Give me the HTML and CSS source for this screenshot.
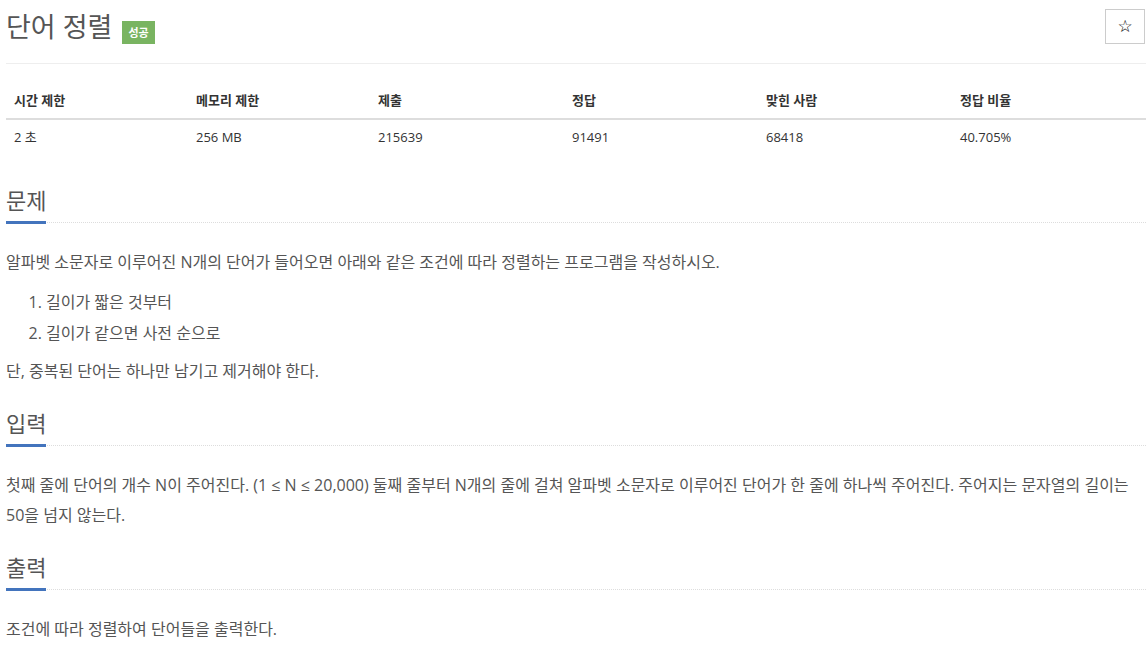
FILE: index.html
```html
<!DOCTYPE html>
<html lang="ko">
<head>
<meta charset="utf-8">
<title>단어 정렬</title>
<link rel="stylesheet" href="styles.css">
</head>
<body>
<div class="container">
  <div class="page-header">
    <h1 class="title"><span class="title-text">단어 정렬</span><span class="badge">성공</span></h1>
    <button class="star" type="button">☆</button>
  </div>

  <table class="info">
    <thead>
      <tr>
        <th class="c1">시간 제한</th>
        <th class="c2">메모리 제한</th>
        <th class="c3">제출</th>
        <th class="c4">정답</th>
        <th class="c5">맞힌 사람</th>
        <th class="c6">정답 비율</th>
      </tr>
    </thead>
    <tbody>
      <tr>
        <td>2 초</td>
        <td>256 MB</td>
        <td>215639</td>
        <td>91491</td>
        <td>68418</td>
        <td>40.705%</td>
      </tr>
    </tbody>
  </table>

  <section class="section">
    <div class="headline"><h2>문제</h2></div>
    <div class="text">
      <p>알파벳 소문자로 이루어진 N개의 단어가 들어오면 아래와 같은 조건에 따라 정렬하는 프로그램을 작성하시오.</p>
      <ol>
        <li>길이가 짧은 것부터</li>
        <li>길이가 같으면 사전 순으로</li>
      </ol>
      <p>단, 중복된 단어는 하나만 남기고 제거해야 한다.</p>
    </div>
  </section>

  <section class="section">
    <div class="headline"><h2>입력</h2></div>
    <div class="text">
      <p>첫째 줄에 단어의 개수 N이 주어진다. (1 ≤ N ≤ 20,000) 둘째 줄부터 N개의 줄에 걸쳐 알파벳 소문자로 이루어진 단어가 한 줄에 하나씩 주어진다. 주어지는 문자열의 길이는 50을 넘지 않는다.</p>
    </div>
  </section>

  <section class="section">
    <div class="headline"><h2>출력</h2></div>
    <div class="text">
      <p>조건에 따라 정렬하여 단어들을 출력한다.</p>
    </div>
  </section>
</div>
</body>
</html>
```

FILE: styles.css
```css
* { box-sizing: border-box; }
html, body { margin: 0; padding: 0; background: #fff; }
body {
  font-family: "Open Sans", "Noto Sans CJK KR", sans-serif;
  color: #555;
  font-size: 14px;
}
.container { padding: 0 1px 0 6px; }

.page-header {
  display: flex;
  justify-content: space-between;
  align-items: flex-start;
  border-bottom: 1px solid #eee;
  height: 64px;
  padding-top: 9px;
}
.title {
  margin: 0;
  margin-top: 1px;
  font-weight: 400;
  font-size: 27px;
  line-height: 34px;
  color: #555;
  display: flex;
  align-items: flex-end;
}
.badge {
  display: inline-block;
  background: #79b461;
  color: #fff;
  font-size: 11px;
  font-weight: 700;
  line-height: 23px;
  height: 23px;
  padding: 0 6px;
  margin-left: 10px;
}
.star {
  width: 40px;
  height: 35px;
  margin-right: 1px;
  border: 1px solid #ccc;
  background: #fff;
  font-size: 17px;
  line-height: 33px;
  color: #000;
  padding: 0;
  font-family: "DejaVu Sans", sans-serif;
}

.info {
  width: 100%;
  border-collapse: collapse;
  margin-top: 19px;
  font-size: 13px;
  color: #333;
}
.info th, .info td {
  text-align: left;
  padding: 8px 8px;
  line-height: 19px;
}
.info th {
  font-weight: 700;
  border-bottom: 2px solid #ddd;
}
.c1 { width: 182px; }
.c2 { width: 182px; }
.c3 { width: 194px; }
.c4 { width: 194px; }
.c5 { width: 194px; }

.section { margin-top: 33px; }
.section + .section { margin-top: 25px; }

.headline {
  border-bottom: 1px dotted #ddd;
  margin-bottom: 24px;
}
.headline h2 {
  display: inline-block;
  margin: 0 0 -2px 0;
  font-size: 22px;
  font-weight: 400;
  line-height: 24px;
  padding-bottom: 9px;
  border-bottom: 3px solid #4374bd;
  color: #555;
}

.text {
  font-size: 16px;
  line-height: 30px;
}
.text p { margin: 0 0 10px 0; }
.text ol { margin: 1px 0 7px 0; padding-left: 40px; }
.text ol li { line-height: 31px; }
```
